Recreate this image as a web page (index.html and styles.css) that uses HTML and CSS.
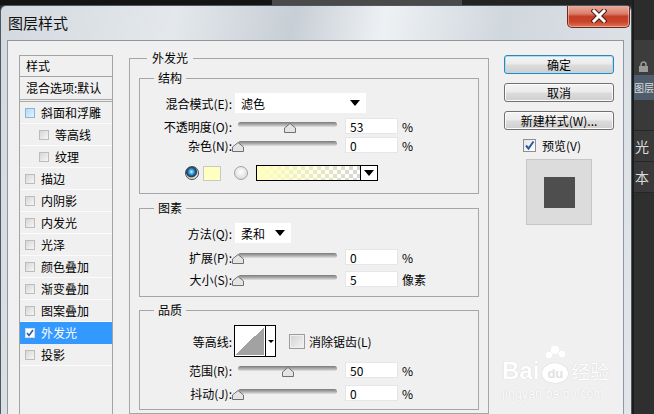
FILE: index.html
```html
<!DOCTYPE html>
<html lang="zh-CN">
<head>
    <meta charset="UTF-8">
    <title>图层样式</title>
    <link rel="stylesheet" href="styles.css">
</head>
<body>
<div class="screen">
    <div class="main">
        <!-- 顶部露出的一条 PS 工具栏 -->
        <div class="topbar"><span class="tb-a"></span><span class="tb-b"></span><span class="tb-c"></span></div>

        <div class="dialog">
            <div class="titlebar">
                <span class="title">图层样式</span>
                <button class="close">
                    <svg width="16" height="14" viewBox="0 0 16 14">
                        <path d="M3 2 L13 12 M13 2 L3 12" stroke="#4a1a12" stroke-width="5" stroke-linecap="square"/>
                        <path d="M3 2 L13 12 M13 2 L3 12" stroke="#fff" stroke-width="3" stroke-linecap="square"/>
                    </svg>
                </button>
            </div>

            <div class="client">
                <!-- 左侧样式列表 -->
                <div class="style-list">
                    <div class="sl-head">样式</div>
                    <div class="sl-blend">混合选项:默认</div>
                    <div class="sl-item"><i class="cb hover"></i>斜面和浮雕</div>
                    <div class="sl-item sub"><i class="cb"></i>等高线</div>
                    <div class="sl-item sub"><i class="cb"></i>纹理</div>
                    <div class="sl-item"><i class="cb"></i>描边</div>
                    <div class="sl-item"><i class="cb"></i>内阴影</div>
                    <div class="sl-item"><i class="cb"></i>内发光</div>
                    <div class="sl-item"><i class="cb"></i>光泽</div>
                    <div class="sl-item"><i class="cb"></i>颜色叠加</div>
                    <div class="sl-item"><i class="cb"></i>渐变叠加</div>
                    <div class="sl-item"><i class="cb"></i>图案叠加</div>
                    <div class="sl-item active">
                        <i class="cb on"><svg width="8" height="8" viewBox="0 0 8 8"><path d="M1 4 L3 6.5 L7 1" fill="none" stroke="#2c5ea8" stroke-width="1.6"/></svg></i>外发光
                    </div>
                    <div class="sl-item"><i class="cb"></i>投影</div>
                </div>

                <!-- 中间参数面板 -->
                <fieldset class="group outer">
                    <legend>外发光</legend>

                    <fieldset class="group inner g-struct">
                        <legend>结构</legend>
                        <div class="row r-mode">
                            <label class="lbl">混合模式(E):</label>
                            <div class="select mode"><span>滤色</span><i class="tri"></i></div>
                        </div>
                        <div class="row r-opacity">
                            <label class="lbl">不透明度(O):</label>
                            <div class="slider"><svg class="thumb" style="left: 53%" width="12" height="10" viewBox="0 0 12 10"><path d="M6 0.5 L11.5 5 V9.5 H0.5 V5 Z" fill="#e4e4e4" stroke="#707070"/></svg></div>
                            <input class="num" type="text" value="53">
                            <span class="unit">%</span>
                        </div>
                        <div class="row r-noise">
                            <label class="lbl">杂色(N):</label>
                            <div class="slider"><svg class="thumb" style="left: 0%" width="12" height="10" viewBox="0 0 12 10"><path d="M6 0.5 L11.5 5 V9.5 H0.5 V5 Z" fill="#e4e4e4" stroke="#707070"/></svg></div>
                            <input class="num" type="text" value="0">
                            <span class="unit">%</span>
                        </div>
                        <div class="row r-color">
                            <i class="radio on"></i>
                            <span class="swatch"></span>
                            <i class="radio"></i>
                            <div class="grad-box"><span class="grad-fill"></span><span class="grad-arrow"><i class="tri"></i></span></div>
                        </div>
                    </fieldset>

                    <fieldset class="group inner g-elem">
                        <legend>图素</legend>
                        <div class="row r-method">
                            <label class="lbl">方法(Q):</label>
                            <div class="select method"><span>柔和</span><i class="tri"></i></div>
                        </div>
                        <div class="row r-spread">
                            <label class="lbl">扩展(P):</label>
                            <div class="slider"><svg class="thumb" style="left: 0%" width="12" height="10" viewBox="0 0 12 10"><path d="M6 0.5 L11.5 5 V9.5 H0.5 V5 Z" fill="#e4e4e4" stroke="#707070"/></svg></div>
                            <input class="num" type="text" value="0">
                            <span class="unit">%</span>
                        </div>
                        <div class="row r-size">
                            <label class="lbl">大小(S):</label>
                            <div class="slider"><svg class="thumb" style="left: 0%" width="12" height="10" viewBox="0 0 12 10"><path d="M6 0.5 L11.5 5 V9.5 H0.5 V5 Z" fill="#e4e4e4" stroke="#707070"/></svg></div>
                            <input class="num" type="text" value="5">
                            <span class="unit">像素</span>
                        </div>
                    </fieldset>

                    <fieldset class="group inner g-quality">
                        <legend>品质</legend>
                        <div class="row r-contour">
                            <label class="lbl">等高线:</label>
                            <div class="contour"><span class="curve"></span><span class="contour-arrow"><i class="tri small"></i></span></div>
                            <i class="check-big"></i>
                            <span class="check-text">消除锯齿(L)</span>
                        </div>
                        <div class="row r-range">
                            <label class="lbl">范围(R):</label>
                            <div class="slider"><svg class="thumb" style="left: 50%" width="12" height="10" viewBox="0 0 12 10"><path d="M6 0.5 L11.5 5 V9.5 H0.5 V5 Z" fill="#e4e4e4" stroke="#707070"/></svg></div>
                            <input class="num" type="text" value="50">
                            <span class="unit">%</span>
                        </div>
                        <div class="row r-jitter">
                            <label class="lbl">抖动(J):</label>
                            <div class="slider"><svg class="thumb" style="left: 0%" width="12" height="10" viewBox="0 0 12 10"><path d="M6 0.5 L11.5 5 V9.5 H0.5 V5 Z" fill="#e4e4e4" stroke="#707070"/></svg></div>
                            <input class="num" type="text" value="0">
                            <span class="unit">%</span>
                        </div>
                    </fieldset>
                </fieldset>

                <!-- 右侧按钮和预览 -->
                <div class="side">
                    <button class="btn default">确定</button>
                    <button class="btn">取消</button>
                    <button class="btn">新建样式(W)...</button>
                    <label class="preview-check">
                        <i class="cb13"><svg width="11" height="11" viewBox="0 0 11 11"><path d="M2 5.5 L4.5 8.5 L9.5 1.5" fill="none" stroke="#2a5aa6" stroke-width="2"/></svg></i>
                        预览(V)
                    </label>
                    <div class="preview"><div class="preview-sq"></div></div>

                    <div class="watermark">
                        <div class="wm-logo">
                            <span class="wm-bai">Bai</span>
                            <span class="wm-paw"><b>du</b></span>
                            <span class="wm-jy">经验</span>
                        </div>
                        <div class="wm-url">jingyan.baidu.com</div>
                    </div>
                </div>
            </div>
        </div>
    </div>

    <!-- 右边露出的 PS 图层面板 -->
    <div class="ps-panel">
        <div class="ps-top"></div>
        <div class="ps-lock">
            <svg width="11" height="12" viewBox="0 0 11 12"><path d="M3 5 V3.5 A2.5 2.5 0 0 1 8 3.5 V5" fill="none" stroke="#9a9a9a" stroke-width="1.5"/><rect x="1" y="5" width="9" height="6" fill="#9a9a9a"/></svg>
        </div>
        <div class="ps-sel">图层</div>
        <div class="ps-row"></div>
        <div class="ps-row">光</div>
        <div class="ps-row">本</div>
        <div class="ps-rest"></div>
    </div>
</div>
</body>
</html>
```

FILE: styles.css
```css
/* 页面整体 */
body {
    margin: 0;
    background-color: #2b2b2b;
    font-family: "Noto Sans CJK SC", sans-serif;
    font-size: 12px;
    color: #000;
}

.screen {
    display: flex;
    height: 414px;
    overflow: hidden;
}

.main {
    width: 632px;
    display: flex;
    flex-direction: column;
}

/* 顶部工具栏残留 */
.topbar {
    height: 5px;
    display: flex;
}
.tb-a { width: 272px; background-color: #141414; }
.tb-b { width: 190px; background-color: #4a4a4a; }
.tb-c { flex: 1; background-color: #232323; }

/* 对话框外框 */
.dialog {
    flex: 1;
    min-height: 0;
    display: flex;
    flex-direction: column;
    border: 1px solid #4d5863;
    border-bottom: none;
    border-radius: 6px 6px 0 0;
    overflow: hidden;
    background: linear-gradient(100deg, #d3d9df 0%, #e4e8ec 25%, #c7ced5 42%, #eef1f4 55%, #d0d7dd 72%, #e2e6ea 100%);
}

.titlebar {
    height: 34px;
    display: flex;
    padding-left: 7px;
}

.title {
    font-size: 15px;
    line-height: 34px;
    color: #111;
}

/* 关闭按钮 */
.close {
    margin-left: auto;
    margin-right: 1px;
    margin-top: -1px;
    width: 63px;
    height: 23px;
    padding: 0;
    border: 1px solid #6e2a20;
    border-top: none;
    border-radius: 0 0 5px 5px;
    background: linear-gradient(#eab1a4 0%, #db7d68 40%, #c53f26 52%, #c9442a 75%, #dc7457 100%);
    box-shadow: inset 0 0 0 1px rgba(255, 220, 210, 0.5);
    display: flex;
    align-items: center;
    justify-content: center;
}

/* 客户区 */
.client {
    flex: 1;
    min-height: 0;
    margin: 0 7px 0 6px;
    border: 1px solid #8d98a2;
    border-bottom: none;
    background-color: #f0f0f0;
    display: flex;
    align-items: flex-start;
    overflow: hidden;
}

/* 左侧样式列表 */
.style-list {
    margin: 14px 0 0 11px;
    width: 94px;
    height: 400px;
    box-sizing: border-box;
    border: 1px solid #a3a3a3;
    flex-shrink: 0;
}

.sl-head {
    height: 20px;
    line-height: 20px;
    padding-left: 6px;
    border-bottom: 1px solid #a3a3a3;
}

.sl-blend {
    height: 22px;
    line-height: 22px;
    padding-left: 6px;
    border-bottom: 3px double #a8a8a8;
    white-space: nowrap;
}

.sl-item {
    height: 21px;
    line-height: 21px;
    padding-left: 5px;
    border-bottom: 1px solid #fbfbfb;
    display: flex;
    align-items: center;
    white-space: nowrap;
}

.sl-item.sub {
    padding-left: 19px;
}

.sl-item.active {
    background-color: #3399ff;
    color: #fff;
    border-bottom-color: #3399ff;
}

/* 小复选框 */
.cb {
    width: 10px;
    height: 10px;
    box-sizing: border-box;
    margin-right: 6px;
    border: 1px solid #bcbcbc;
    background: linear-gradient(135deg, #d6d6d6, #f6f6f6);
    display: flex;
    align-items: center;
    justify-content: center;
    flex-shrink: 0;
}

.cb.hover {
    border-color: #86b6dc;
    background: linear-gradient(135deg, #b5d9f3, #e6f3fc);
}

.cb.on {
    border-color: #d0dbe6;
    background: #fff;
}

/* 分组框 */
.group {
    margin: 0;
    padding: 0;
    border: 1px solid #a6a6a6;
    box-sizing: border-box;
    min-width: 0;
}

.group legend {
    line-height: 16px;
    padding: 0 5px;
    margin-left: 8px;
}

.outer {
    margin: 9px 0 0 16px;
    width: 360px;
    padding: 0 9px 3px;
    flex-shrink: 0;
}

.inner legend {
    padding: 0 4px;
    margin-left: 14px;
}

.g-struct {
    margin-top: 4px;
    padding-bottom: 12px;
}

.g-elem {
    margin-top: 6px;
    padding-bottom: 9px;
}

.g-quality {
    margin-top: 5px;
    padding-bottom: 8px;
}

/* 参数行 */
.row {
    display: flex;
    align-items: center;
    height: 16px;
    white-space: nowrap;
}

.lbl {
    width: 92px;
    text-align: right;
    flex-shrink: 0;
}

.r-mode { margin-top: 7px; height: 20px; }
.r-opacity { margin-top: 5px; }
.r-noise { margin-top: 3px; }
.r-color { margin-top: 12px; padding-left: 45px; }
.r-method { margin-top: 7px; height: 20px; }
.r-spread { margin-top: 6px; }
.r-size { margin-top: 6px; }
.r-contour { margin-top: 7px; height: 32px; }
.r-range { margin-top: 5px; }
.r-jitter { margin-top: 7px; }

/* 下拉框 */
.select {
    margin-left: 3px;
    height: 20px;
    background-color: #fff;
    display: flex;
    align-items: center;
    padding: 0 6px;
    box-sizing: border-box;
}
.select.mode { width: 131px; }
.select.method { width: 56px; }

.tri {
    margin-left: auto;
    width: 0;
    height: 0;
    border-left: 5px solid transparent;
    border-right: 5px solid transparent;
    border-top: 6px solid #000;
}

.tri.small {
    border-left-width: 3px;
    border-right-width: 3px;
    border-top-width: 3px;
}

/* 滑块 */
.slider {
    position: relative;
    margin-left: 6px;
    width: 99px;
    height: 16px;
    flex-shrink: 0;
}

.slider::before {
    content: "";
    position: absolute;
    left: 0;
    right: 0;
    top: 4px;
    height: 5px;
    border-radius: 3px;
    background: linear-gradient(#7a7a7a, #b4b4b4 60%, #e2e2e2);
}

.thumb {
    position: absolute;
    top: 5px;
    margin-left: -6px;
}

/* 数值框 */
.num {
    margin: 0 0 0 8px;
    width: 53px;
    height: 16px;
    box-sizing: border-box;
    border: 1px solid #e6e6e6;
    background-color: #fff;
    padding: 0 4px;
    font-family: "Noto Sans CJK SC", sans-serif;
    font-size: 12px;
    color: #000;
    outline: none;
}

.unit {
    margin-left: 4px;
}

/* 颜色选择行 */
.radio {
    width: 14px;
    height: 14px;
    box-sizing: border-box;
    border-radius: 50%;
    border: 1px solid #a2a2a2;
    background: radial-gradient(circle at 50% 40%, #ffffff, #d2d2d2);
    flex-shrink: 0;
}

.radio.on {
    border-color: #4a4a4a;
    background: radial-gradient(circle at 45% 40%, #d8f2ff 0, #46a8e2 22%, #0d5184 44%, #2e3a44 52%, #d8d8d8 62%, #ffffff 100%);
}

.swatch {
    margin: 0 13px 0 4px;
    width: 18px;
    height: 15px;
    box-sizing: border-box;
    border: 1px solid #c8c8c8;
    background-color: #ffffc0;
}

.grad-box {
    margin-left: 8px;
    width: 122px;
    height: 16px;
    box-sizing: border-box;
    border: 1px solid #000;
    display: flex;
    background-color: #fff;
}

.grad-fill {
    flex: 1;
    background:
        linear-gradient(to right, #ffffc0, rgba(255, 255, 192, 0)),
        conic-gradient(#d6d6d6 25%, #ffffff 0 50%, #d6d6d6 0 75%, #ffffff 0) 0 0 / 8px 8px;
}

.grad-arrow {
    width: 16px;
    border-left: 1px solid #000;
    display: flex;
    align-items: center;
    justify-content: center;
}

.grad-arrow .tri {
    margin: 0;
}

/* 等高线 */
.contour {
    margin-left: 2px;
    width: 42px;
    height: 32px;
    box-sizing: border-box;
    border: 1px solid #000;
    background-color: #fff;
    display: flex;
}

.curve {
    width: 30px;
    background: linear-gradient(to bottom right, #fff 50%, #a2a2a2 50%);
    border: 1px solid #fff;
    box-sizing: border-box;
}

.contour-arrow {
    flex: 1;
    border-left: 1px solid #000;
    display: flex;
    align-items: center;
    justify-content: center;
}

.contour-arrow .tri {
    margin: 0;
}

.check-big {
    margin-left: 13px;
    width: 16px;
    height: 15px;
    box-sizing: border-box;
    border: 1px solid #9c9c9c;
    background: linear-gradient(135deg, #d2d2d2, #f4f4f4);
    box-shadow: inset 0 0 0 1px #f0f0f0;
}

.check-text {
    margin-left: 4px;
}

/* 右侧按钮列 */
.side {
    margin: 14px 0 0 15px;
    width: 110px;
    display: flex;
    flex-direction: column;
    flex-shrink: 0;
}

.btn {
    height: 19px;
    margin-bottom: 9px;
    padding: 0;
    border: 1px solid #707070;
    border-radius: 3px;
    background: linear-gradient(#f4f4f4 0%, #ebebeb 48%, #dcdcdc 52%, #cfcfcf 100%);
    box-shadow: inset 0 0 0 1px #fbfbfb;
    font-family: "Noto Sans CJK SC", sans-serif;
    font-size: 12px;
    line-height: 16px;
    color: #000;
}

.btn.default {
    border-color: #3c7fb1;
    box-shadow: inset 0 0 0 1px #9ee3fa;
}

.preview-check {
    display: flex;
    align-items: center;
    height: 14px;
    padding-left: 19px;
    margin-top: -1px;
}

.cb13 {
    width: 13px;
    height: 13px;
    box-sizing: border-box;
    margin-right: 6px;
    border: 1px solid #8f8f8f;
    background: linear-gradient(135deg, #e6e6e6, #ffffff);
    display: flex;
    align-items: center;
    justify-content: center;
}

.preview {
    margin: 7px 0 0 22px;
    width: 66px;
    height: 66px;
    box-sizing: border-box;
    border: 1px solid #c6c6c6;
    background-color: #dcdcdc;
    display: flex;
    align-items: center;
    justify-content: center;
}

.preview-sq {
    width: 31px;
    height: 31px;
    background-color: #4e4e4e;
}

/* 百度经验水印 */
.watermark {
    margin: 116px 0 0 -2px;
    color: #fff;
    text-shadow: 0 0 1px #c4c4c4;
}

.wm-logo {
    display: flex;
    align-items: flex-end;
    height: 42px;
}

.wm-bai {
    font-family: "Liberation Sans", sans-serif;
    font-weight: bold;
    font-size: 24px;
    line-height: 24px;
}

.wm-paw {
    position: relative;
    margin: 0 3px;
    width: 26px;
    height: 20px;
    border-radius: 50% 50% 45% 45%;
    background-color: #fff;
    box-shadow: 0 0 1px #b8b8b8;
    display: flex;
    align-items: center;
    justify-content: center;
}

.wm-paw::before {
    content: "";
    position: absolute;
    top: -17px;
    left: 3px;
    width: 20px;
    height: 14px;
    background:
        radial-gradient(circle at 4px 9px, #fff 3px, transparent 3.5px),
        radial-gradient(circle at 10px 4px, #fff 4px, transparent 4.5px),
        radial-gradient(circle at 17px 8px, #fff 3px, transparent 3.5px);
}

.wm-paw b {
    font-family: "Liberation Sans", sans-serif;
    font-size: 13px;
    color: #e2e2e2;
    text-shadow: none;
}

.wm-jy {
    font-size: 19px;
    line-height: 24px;
}

.wm-url {
    margin-top: 4px;
    font-family: "Liberation Sans", sans-serif;
    font-size: 12px;
    letter-spacing: 0.3px;
}

/* 右侧 PS 面板 */
.ps-panel {
    flex: 1;
    display: flex;
    flex-direction: column;
    background-color: #323232;
    border-left: 2px solid #1c1c1c;
    color: #dcdcdc;
    font-size: 14px;
    overflow: hidden;
    white-space: nowrap;
}

.ps-top {
    height: 40px;
    background-color: #2c2c2c;
}

.ps-lock {
    height: 35px;
    background-color: #3c3c3c;
    padding: 17px 0 0 4px;
    box-sizing: border-box;
}

.ps-sel {
    height: 25px;
    line-height: 25px;
    background-color: #4e5c6b;
    font-size: 10px;
}

.ps-row {
    height: 30px;
    line-height: 30px;
    padding-left: 1px;
    border-bottom: 1px solid #262626;
    background-color: #393939;
}

.ps-rest {
    flex: 1;
    background-color: #2f2f2f;
}
```
